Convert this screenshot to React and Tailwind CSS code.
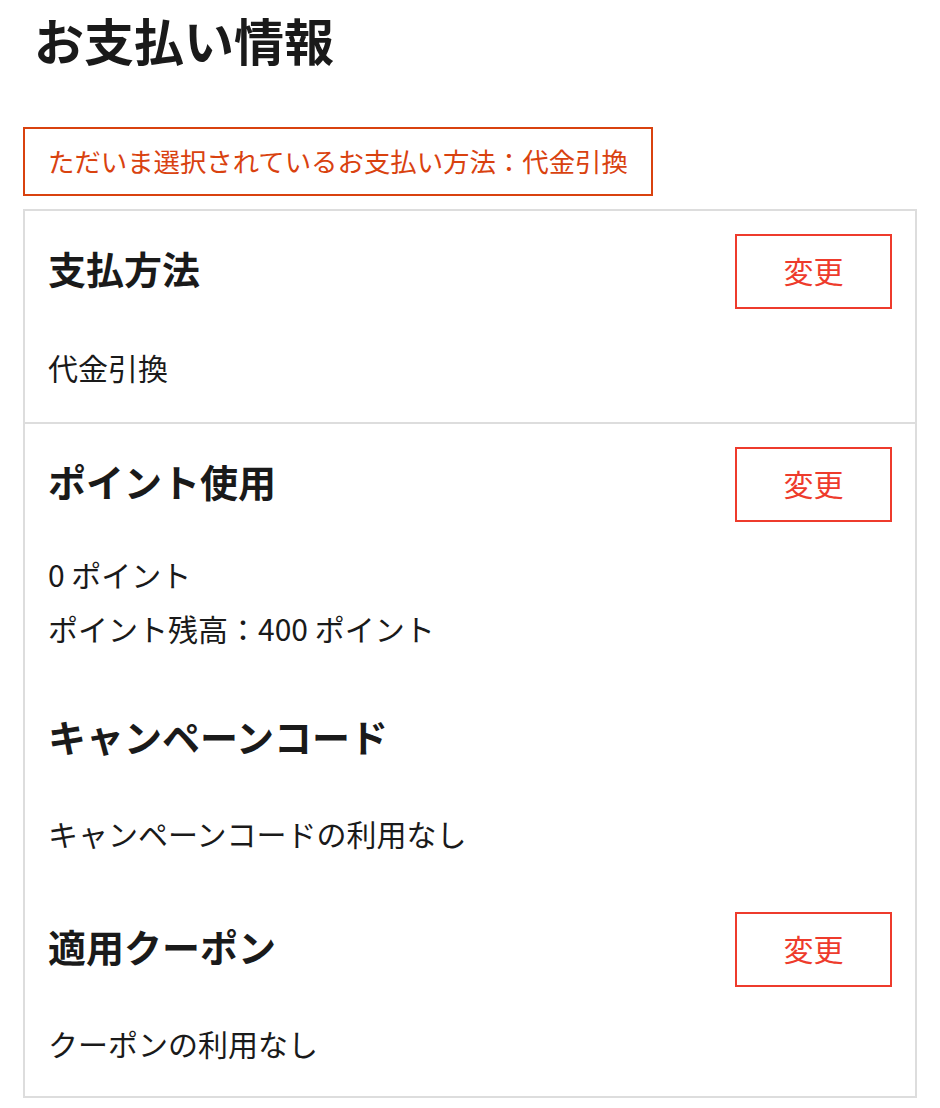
import React from "react";

const font = { fontFamily: '"Noto Sans CJK JP", "Noto Sans", sans-serif' };

function ChangeButton() {
  return (
    <button className="w-[157px] h-[75px] border-2 border-[#ee3b2c] text-[#ee3b2c] text-[30px] leading-none pb-[3px] bg-white">
      変更
    </button>
  );
}

function Header({ title, action }) {
  return (
    <div className="flex items-center justify-between h-[75px]">
      <h3 className="text-[38px] font-bold text-[#1a1a1a] leading-none pb-[8px]">{title}</h3>
      {action && <ChangeButton />}
    </div>
  );
}

export default function App() {
  return (
    <div className="bg-white min-h-[1108px] text-[#1a1a1a]" style={font}>
      <div className="pl-[23px] pr-[23px] pt-[8px]">
        <h1 className="ml-[11px] text-[50px] font-bold leading-[62px] text-[#1a1a1a]">お支払い情報</h1>

        <div className="mt-[57px] inline-block border-2 border-[#d9420f] px-[23px] h-[69px] leading-[63px] text-[26.4px] text-[#d9420f]">
          ただいま選択されているお支払い方法：代金引換
        </div>

        <div className="mt-[13px] w-[894px] border-2 border-[#dddddd]">
          {/* payment method */}
          <section className="px-[23px] pt-[23px] pb-[32px]">
            <Header title="支払方法" action />
            <p className="mt-[38px] text-[30px] leading-[40px] pb-[3px]">代金引換</p>
          </section>

          <div className="h-[2px] bg-[#dddddd]" />

          <section className="px-[23px] pt-[23px] pb-[31px]">
            <Header title="ポイント使用" action />
            <div className="mt-[25px] text-[30px] leading-[54px] pb-[2px]">
              <p>0 ポイント</p>
              <p>ポイント残高：400 ポイント</p>
            </div>

            <div className="mt-[45px]">
              <Header title="キャンペーンコード" />
            </div>
            <p className="mt-[36px] text-[30px] leading-[40px] pb-[2px]">キャンペーンコードの利用なし</p>

            <div className="mt-[57px]">
              <Header title="適用クーポン" action />
            </div>
            <p className="mt-[36px] text-[30px] leading-[40px] pb-[2px]">クーポンの利用なし</p>
          </section>
        </div>
      </div>
    </div>
  );
}
